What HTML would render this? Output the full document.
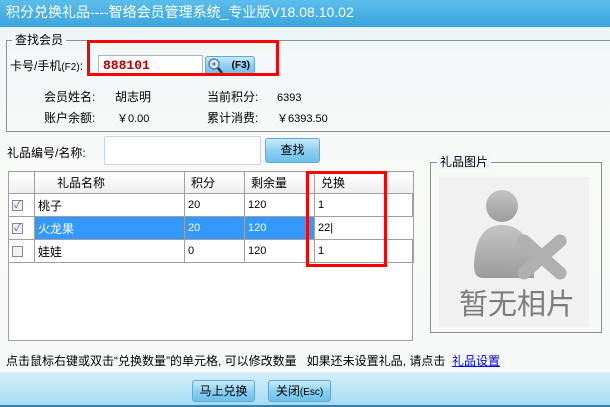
<!DOCTYPE html>
<html><head><meta charset="utf-8"><style>
*{margin:0;padding:0;box-sizing:border-box}
body{width:610px;height:407px;overflow:hidden;position:relative;font-family:"Liberation Sans","Noto Sans CJK SC",sans-serif;font-size:12px;color:#000;background:linear-gradient(#e4f3fa 0px,#f4f8f8 60px,#f9faf8 200px,#f6f9f8 350px)}
.a{position:absolute;line-height:14px}
.title{left:0;top:0;width:610px;height:27px;background:linear-gradient(#5cbdea,#3aa5de);color:#fff;font-size:14px;line-height:25px;padding-left:6px}
.gb{border:1px solid #8f8f8f}
.lg{background:#f1f7f8;padding:0 3px;font-size:12px;line-height:14px}
.btn{border:1px solid #5ea9d8;border-radius:3px;background:linear-gradient(#c9ebfa,#8fd0f0 50%,#6cc0ec);text-align:center;font-size:12px}
table{border-collapse:collapse;position:absolute;left:8px;top:171px}
td{border:1px solid #a0a0a0;height:23px;padding-left:3px;font-size:11px;vertical-align:middle}
th{border:1px solid #a0a0a0;height:22px;font-weight:normal;text-align:left;padding-left:22px;background:linear-gradient(#fff,#eee);font-size:12px}
.cb{width:11px;height:11px;border:1px solid #8a8a8a;background:#f2f2f2;margin-left:3px;font-size:10px;line-height:9px;color:#3b5db3;text-align:center}
.sel td{background:#3399ff;color:#fff}
.red{border:3px solid #ff0000}
</style></head><body>
<div class="a title" style="line-height:25px">积分兑换礼品----智络会员管理系统_专业版V18.08.10.02</div>
<div class="a gb" style="left:6px;top:40px;width:610px;height:92px"></div>
<div class="a lg" style="left:12px;top:33px">查找会员</div>
<div class="a" style="left:10px;top:59px;font-size:12px">卡号/手机<span style="font-size:10px">(F2)</span>:</div>
<div class="a" style="left:98px;top:55px;width:105px;height:21px;background:#fff;border:1px solid #b5b5b5;color:#b00000;font-weight:bold;font-family:'Liberation Mono',monospace;font-size:13px;line-height:19px;padding-left:4px">888101</div>
<div class="a btn" style="left:205px;top:56px;width:50px;height:19px;font-size:10px;font-weight:bold;line-height:17px;text-align:right;padding-right:4px">(F3)</div>
<svg class="a" style="left:207px;top:57px" width="16" height="17"><circle cx="7" cy="7" r="5" fill="#dfefff" stroke="#5a7fa8" stroke-width="1.5"/><path d="M11 11l4 5" stroke="#333" stroke-width="2.5"/><path d="M5 7h4M7 5v4" stroke="#3367b0"/></svg>
<div class="a red" style="left:87px;top:40px;width:192px;height:36px"></div>
<div class="a" style="left:44px;top:90px">会员姓名:</div><div class="a" style="left:115px;top:90px">胡志明</div>
<div class="a" style="left:207px;top:90px">当前积分:</div><div class="a" style="left:277px;top:91px;font-size:11px">6393</div>
<div class="a" style="left:44px;top:111px">账户余额:</div><div class="a" style="left:117px;top:112px;font-size:11px">￥0.00</div>
<div class="a" style="left:207px;top:111px">累计消费:</div><div class="a" style="left:277px;top:112px;font-size:11px">￥6393.50</div>
<div class="a" style="left:7px;top:146px">礼品编号/名称:</div>
<div class="a" style="left:104px;top:136px;width:157px;height:29px;background:#fff;border:1px solid #c5d6e4;border-radius:2px"></div>
<div class="a btn" style="left:265px;top:138px;width:55px;height:25px;line-height:23px">查找</div>
<div class="a" style="left:8px;top:171px;width:405px;height:170px;background:#fff;border:1px solid #a0a0a0"></div>
<table>
<tr><th style="width:26px;padding:0"></th><th style="width:150px">礼品名称</th><th style="width:60px;padding-left:6px">积分</th><th style="width:70px;padding-left:6px">剩余量</th><th style="width:70px;padding-left:6px">兑换</th><th style="width:29px;padding:0"></th></tr>
<tr><td style="padding:0"><div class="cb">✓</div></td><td style="font-size:12px">桃子</td><td>20</td><td>120</td><td>1</td><td></td></tr>
<tr class="sel"><td style="padding:0;background:#fff"><div class="cb">✓</div></td><td style="font-size:12px">火龙果</td><td>20</td><td>120</td><td style="background:#fff;color:#000">22|</td><td style="background:#fff"></td></tr>
<tr><td style="padding:0"><div class="cb"></div></td><td style="font-size:12px">娃娃</td><td>0</td><td>120</td><td>1</td><td></td></tr>
</table>
<div class="a red" style="left:306px;top:171px;width:81px;height:96px"></div>
<div class="a gb" style="left:430px;top:162px;width:172px;height:171px"></div>
<div class="a lg" style="left:437px;top:155px">礼品图片</div>
<div class="a" style="left:439px;top:177px;width:150px;height:150px;background:#f1f1f1"></div>
<svg class="a" style="left:439px;top:177px" width="150" height="150">
<defs><linearGradient id="g" x1="0" y1="0" x2="0" y2="1"><stop offset="0" stop-color="#c4c4c4"/><stop offset="1" stop-color="#9c9c9c"/></linearGradient></defs>
<circle cx="63" cy="29" r="16" fill="url(#g)"/>
<path d="M44 101q-9 0-9-12q1-41 28-41q24 0 32 32v21z" fill="url(#g)"/>
<path d="M85 64l36 32M121 64l-36 32" stroke="#b0b0b0" stroke-width="13" stroke-linecap="round"/>
<text x="78" y="137" text-anchor="middle" font-family="Noto Sans CJK SC,sans-serif" font-size="29" fill="#7d7d7d">暂无相片</text>
</svg>
<div class="a" style="left:6px;top:354px">点击鼠标右键或双击“兑换数量”的单元格, 可以修改数量 &nbsp; 如果还未设置礼品, 请点击 &nbsp;<span style="color:#0000ee;text-decoration:underline">礼品设置</span></div>
<div class="a" style="left:0;top:372px;width:610px;height:35px;background:linear-gradient(#d6f0f9,#a6dcf3);border-bottom:2px solid #3a7ea8"></div>
<div class="a btn" style="left:192px;top:380px;width:63px;height:22px;line-height:20px">马上兑换</div>
<div class="a btn" style="left:268px;top:380px;width:63px;height:22px;line-height:20px">关闭<span style="font-size:10px">(Esc)</span></div>
</body></html>
